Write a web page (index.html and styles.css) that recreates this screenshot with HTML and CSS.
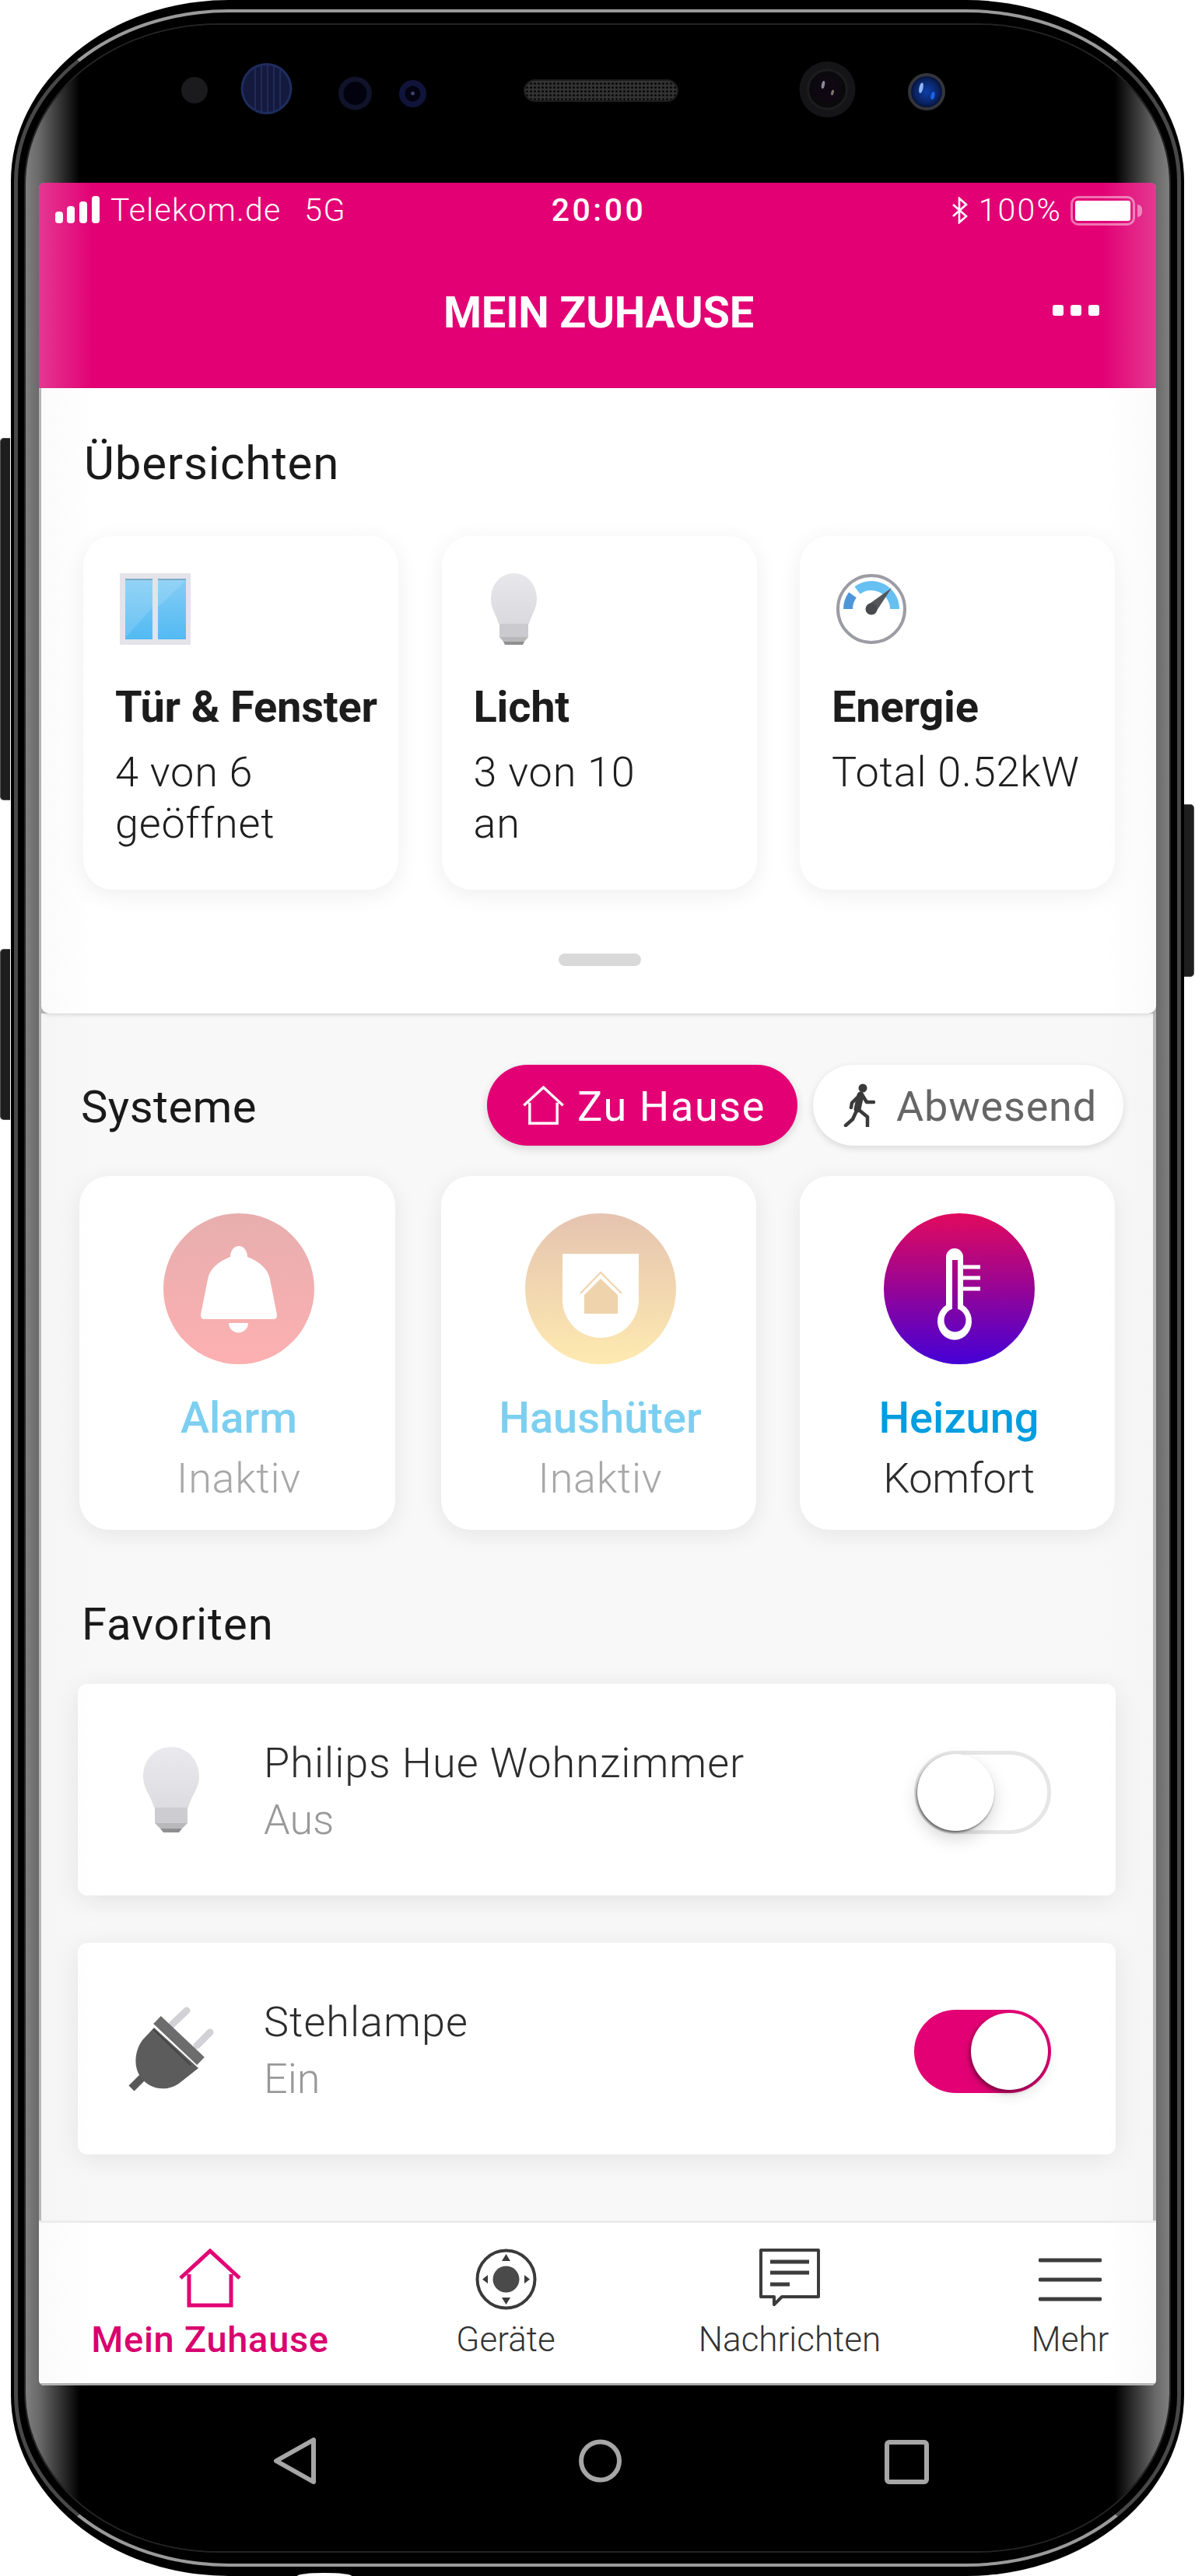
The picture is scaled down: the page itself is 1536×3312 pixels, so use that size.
FILE: index.html
```html
<!DOCTYPE html>
<html lang="de">
<head>
<meta charset="utf-8">
<title>Mein Zuhause</title>
<link rel="stylesheet" href="styles.css">
</head>
<body>
<div class="phone">
  <span class="side-btn side-vol"></span>
  <span class="side-btn side-ai"></span>
  <span class="side-btn side-pow"></span>
  <span class="port"></span>
  <div class="face">
    <svg class="sensors" viewBox="50 32 1436 203" width="1436" height="203">
      <defs>
        <pattern id="mesh" width="5" height="5" patternUnits="userSpaceOnUse"><rect width="5" height="5" fill="#333"/><circle cx="2.500" cy="2.500" r="1.600" fill="#0a0a0a"/></pattern>
        <radialGradient id="blue" cx=".5" cy=".5" r=".55"><stop offset="0" stop-color="#0d3fa8"/><stop offset=".7" stop-color="#0a2260"/><stop offset="1" stop-color="#050c26"/></radialGradient>
      </defs>
      <circle cx="250" cy="116" r="17" fill="#1b1b1d"/>
      <circle cx="342.500" cy="114" r="33" fill="#1e2d5e"/>
      <circle cx="342.500" cy="114" r="30" fill="#141a3e"/>
      <path d="M328 88V140M336 84V144M344 83V145M352 84V144M360 90V138" stroke="#232a5a" stroke-width="2"/>
      <circle cx="456.500" cy="120" r="21.500" fill="#10132a"/>
      <circle cx="456.500" cy="120" r="15" fill="#02020f"/>
      <circle cx="530.500" cy="120.500" r="17.500" fill="#11143a"/>
      <circle cx="530.500" cy="120.500" r="10" fill="#020210"/>
      <circle cx="530.500" cy="120" r="2.500" fill="#3a4168"/>
      <rect x="674" y="103" width="197" height="27" rx="13.500" fill="url(#mesh)" stroke="#1d1d1d" stroke-width="2"/>
      <circle cx="1063.500" cy="115" r="36" fill="#151517"/>
      <circle cx="1063.500" cy="115" r="25" fill="#0a0a0c" stroke="#1d1d20" stroke-width="3"/>
      <circle cx="1063" cy="115" r="16.500" fill="#0f0812"/>
      <ellipse cx="1058" cy="109" rx="2" ry="5" fill="#8d8896" transform="rotate(12 1058 109)"/>
      <ellipse cx="1070" cy="119" rx="1.700" ry="3.500" fill="#7f7c70" transform="rotate(12 1070 119)"/>
      <circle cx="1191" cy="118" r="24" fill="#34353a"/>
      <circle cx="1191" cy="118" r="20" fill="url(#blue)"/>
      <ellipse cx="1184" cy="113" rx="2.500" ry="7" fill="#8fb5f5" transform="rotate(12 1184 113)"/>
      <ellipse cx="1199" cy="123" rx="2.500" ry="5" fill="#1a62e6" transform="rotate(12 1199 123)"/>
    </svg>
    <main class="screen">
      <div class="appbar">
        <div class="status">
          <div class="status-left">
            <svg class="signal" viewBox="0 0 57 35" width="57" height="35"><rect x="0" y="20" width="10" height="15" rx="4" fill="#fff"/><rect x="15" y="13" width="10" height="22" rx="4" fill="#fff"/><rect x="31" y="7" width="10" height="28" rx="4" fill="#fff"/><rect x="47" y="0" width="10" height="35" rx="4" fill="#fff"/></svg>
            <span>Telekom.de</span><span class="net">5G</span>
          </div>
          <div class="status-time">20:00</div>
          <div class="status-right">
            <svg class="bt" viewBox="0 0 21 35" width="21" height="35"><path d="M2 10L19 25L10 33V2L19 10L2 25" fill="none" stroke="#fff" stroke-width="2.600"/></svg>
            <span class="pct">100%</span>
            <span class="battery"><span class="battery-fill"></span></span>
            <span class="battery-cap"></span>
          </div>
        </div>
        <header class="titlebar">
          <h1 class="title">MEIN ZUHAUSE</h1>
          <div class="dots"><i></i><i></i><i></i></div>
        </header>
      </div>

      <div class="content">
        <section class="overview">
          <h2 class="h-over">Übersichten</h2>
          <div class="over-cards">
            <article class="over-card">
              <svg class="over-icon" viewBox="0 0 91 92" width="91" height="92">
                <defs><linearGradient id="pane" x1="0" y1="0" x2="0" y2="1"><stop offset="0" stop-color="#85cdf5"/><stop offset="1" stop-color="#52baf3"/></linearGradient></defs>
                <rect width="91" height="92" fill="#e4e3e9"/>
                <rect x="7" y="7" width="35" height="78" fill="url(#pane)"/>
                <rect x="49" y="7" width="36" height="78" fill="url(#pane)"/>
                <rect x="7" y="7" width="35" height="2" fill="#7aaac8"/>
                <rect x="49" y="7" width="36" height="2" fill="#7aaac8"/>
                <path d="M7 9H42V44L7 83Z" fill="#fff" opacity=".13"/>
                <path d="M49 9H85V9L49 44Z" fill="#fff" opacity=".13"/>
              </svg>
              <h3 class="card-title">Tür &amp; Fenster</h3>
              <p class="card-text">4 von 6<br>geöffnet</p>
            </article>
            <article class="over-card">
              <svg class="over-icon" viewBox="-15 0 91 92" width="91" height="92">
                <defs><linearGradient id="glass" x1="0" y1="0" x2="0" y2="1"><stop offset="0" stop-color="#e8e8ec"/><stop offset="1" stop-color="#d9d9de"/></linearGradient></defs>
                <path d="M30.500 0C47 0 60 14 60 33C60 46 53 53 50 65H11C8 53 1 46 1 33C1 14 14 0 30.500 0Z" fill="url(#glass)"/>
                <path d="M12 65H49V82H12Z" fill="#cbcbcf"/>
                <path d="M12 82H49L44 88H17Z" fill="#b8b8bb"/>
                <path d="M17 88H44L42 92H19Z" fill="#8f8f92"/>
              </svg>
              <h3 class="card-title">Licht</h3>
              <p class="card-text">3 von 10<br>an</p>
            </article>
            <article class="over-card">
              <svg class="over-icon" viewBox="0 0 91 92" width="91" height="92">
                <circle cx="45" cy="46" r="43" fill="#fff" stroke="#9c9ca4" stroke-width="4"/>
                <path d="M15 46A30 30 0 0 1 21 28" fill="none" stroke="#4d96d9" stroke-width="12"/>
                <path d="M27 22A30 30 0 0 1 75 46" fill="none" stroke="#66c0f2" stroke-width="12"/>
                <path d="M40 41L71 19L50 51Z" fill="#55565a"/>
                <circle cx="45" cy="46" r="7.500" fill="#48494c"/>
              </svg>
              <h3 class="card-title">Energie</h3>
              <p class="card-text">Total 0.52kW</p>
            </article>
          </div>
          <div class="handle"></div>
        </section>

        <section class="systems">
          <div class="sys-head">
            <h2 class="h-sys">Systeme</h2>
            <div class="modes">
              <div class="mode mode-on">
                <svg class="mode-home" viewBox="0 0 80 75" width="55" height="51"><path d="M3 37L40 3L77 37M14 32V71H66V32" fill="none" stroke="#fff" stroke-width="5"/></svg>
                <span>Zu Hause</span>
              </div>
              <div class="mode mode-off">
                <svg class="mode-walk" viewBox="0 0 42 56" width="42" height="56"><circle cx="26" cy="6" r="5.500" fill="#3a3a3a"/><path d="M23 15L19 33" stroke="#3a3a3a" stroke-width="9" stroke-linecap="round"/><path d="M20 17L12 25L11 31M26 16L31 24H40M19 33L13 46L4 54M21 34L32 43V55" fill="none" stroke="#3a3a3a" stroke-width="4.500" stroke-linecap="round" stroke-linejoin="round"/></svg>
                <span>Abwesend</span>
              </div>
            </div>
          </div>
          <div class="sys-cards">
            <article class="sys-card">
              <svg class="sys-icon" viewBox="0 0 194 194" width="194" height="194">
                <defs><linearGradient id="g-alarm" x1="0" y1="0" x2="0" y2="1"><stop offset="0" stop-color="#e7aeae"/><stop offset="1" stop-color="#fdb0b1"/></linearGradient></defs>
                <circle cx="97" cy="97" r="97" fill="url(#g-alarm)"/>
                <path d="M97 42C103 42 108 48 108 56C124 62 135 72 137 85L146 130Q146 136 142 136H52Q48 136 48 130L57 85C59 72 70 62 86 56C86 48 91 42 97 42Z" fill="#fff"/>
                <path d="M84 141H109A12.500 12.500 0 0 1 84 141Z" fill="#fff"/>
              </svg>
              <h3 class="sys-title sys-faded">Alarm</h3>
              <p class="sys-sub sys-sub-faded">Inaktiv</p>
            </article>
            <article class="sys-card">
              <svg class="sys-icon" viewBox="0 0 194 194" width="194" height="194">
                <defs><linearGradient id="g-home" x1="0" y1="0" x2="0" y2="1"><stop offset="0" stop-color="#e5c3b0"/><stop offset="1" stop-color="#feeab0"/></linearGradient></defs>
                <circle cx="97" cy="97" r="97" fill="url(#g-home)"/>
                <path d="M48 52H146V111A49 49 0 0 1 48 111Z" fill="#fff"/>
                <path d="M97 84L119 105V129H76V105Z" fill="#efd3ad"/>
                <path d="M71 103L97 76L124 103" fill="none" stroke="#efd3ad" stroke-width="2"/>
              </svg>
              <h3 class="sys-title sys-faded">Haushüter</h3>
              <p class="sys-sub sys-sub-faded">Inaktiv</p>
            </article>
            <article class="sys-card">
              <svg class="sys-icon" viewBox="0 0 194 194" width="194" height="194">
                <defs><linearGradient id="g-heat" x1="0" y1="0" x2="0" y2="1"><stop offset="0" stop-color="#e20a5e"/><stop offset=".45" stop-color="#9e0590"/><stop offset="1" stop-color="#4400d6"/></linearGradient></defs>
                <circle cx="97" cy="97" r="97" fill="url(#g-heat)"/>
                <path fill-rule="evenodd" d="M80 56A11 11 0 0 1 102 56V118A22 24 0 1 1 80 118ZM88 60V123A14 15 0 1 0 95 123V60Z" fill="#fff"/>
                <path d="M102 69H124M102 83H124M102 97H124" stroke="#fff" stroke-width="5"/>
              </svg>
              <h3 class="sys-title">Heizung</h3>
              <p class="sys-sub sys-sub-dark">Komfort</p>
            </article>
          </div>

          <h2 class="h-fav">Favoriten</h2>
          <article class="fav">
            <div class="fav-icon">
              <svg viewBox="0 0 72 110" width="72" height="110">
                <defs><linearGradient id="glass2" x1="0" y1="0" x2="0" y2="1"><stop offset="0" stop-color="#eaeaee"/><stop offset="1" stop-color="#dcdce1"/></linearGradient></defs>
                <path d="M36 0C56 0 72 16 72 38C72 54 62 62 58 78H14C10 62 0 54 0 38C0 16 16 0 36 0Z" fill="url(#glass2)"/>
                <path d="M15 78H57V98H15Z" fill="#cdcdd1"/>
                <path d="M15 98H57L50 105H22Z" fill="#b8b8bb"/>
                <path d="M22 105H50L46 110H26Z" fill="#8f8f92"/>
              </svg>
            </div>
            <div class="fav-text">
              <h3 class="fav-title">Philips Hue Wohnzimmer</h3>
              <p class="fav-sub">Aus</p>
            </div>
            <div class="toggle toggle-off"><span class="knob"></span></div>
          </article>
          <article class="fav fav-second">
            <div class="fav-icon">
              <svg viewBox="0 0 110 110" width="110" height="110">
                <path d="M56 24L75 6M88 51L105 34" stroke="#d2d2d6" stroke-width="9" stroke-linecap="round"/>
                <path d="M24 86L4 106" stroke="#575757" stroke-width="10"/>
                <path d="M33 28L90 80L66 99C50 111 28 108 16 92C6 78 8 58 18 44Z" fill="#5c5c5c"/>
                <path d="M37 18L93 71" stroke="#6c6c6c" stroke-width="14"/>
                <path d="M32 30L80 76" stroke="#444" stroke-width="2"/>
              </svg>
            </div>
            <div class="fav-text">
              <h3 class="fav-title">Stehlampe</h3>
              <p class="fav-sub">Ein</p>
            </div>
            <div class="toggle toggle-on"><span class="knob"></span></div>
          </article>
        </section>
      </div>

      <nav class="tabbar">
        <div class="tab tab-active">
          <svg viewBox="0 0 80 79" width="80" height="79"><path d="M2 38L40 3L78 38M13 33V73H67V33" fill="none" stroke="#e20074" stroke-width="5"/></svg>
          <span>Mein Zuhause</span>
        </div>
        <div class="tab">
          <svg viewBox="0 0 79 79" width="79" height="79"><circle cx="39.500" cy="39.500" r="37" fill="none" stroke="#3a3a3a" stroke-width="4"/><circle cx="39.500" cy="39.500" r="17" fill="#4a4a4a"/><path d="M39.500 7L45 16H34ZM39.500 72L45 63H34ZM9 39.500L16 34V45ZM70 39.500L63 34V45Z" fill="#3a3a3a"/></svg>
          <span>Geräte</span>
        </div>
        <div class="tab">
          <svg viewBox="0 0 80 79" width="80" height="79"><path d="M3 2H77V62H30L20 72V62H3Z" fill="none" stroke="#3c3c3c" stroke-width="4" stroke-linejoin="round"/><path d="M15 17H65M15 31H65M15 46H40" stroke="#3c3c3c" stroke-width="5"/></svg>
          <span>Nachrichten</span>
        </div>
        <div class="tab tab-last">
          <svg viewBox="0 0 81 79" width="81" height="79"><path d="M2 15H79M2 40H79M2 65H79" stroke="#3c3c3c" stroke-width="5" stroke-linecap="round"/></svg>
          <span>Mehr</span>
        </div>
      </nav>
    </main>
    <div class="softkeys">
      <svg viewBox="0 0 54 60" width="54" height="60"><path d="M51 3V57L3 30Z" fill="none" stroke="#a6a6a6" stroke-width="6" stroke-linejoin="round"/></svg>
      <svg viewBox="0 0 55 60" width="55" height="60"><circle cx="27.500" cy="30" r="24.500" fill="none" stroke="#a6a6a6" stroke-width="6"/></svg>
      <svg viewBox="0 0 57 60" width="57" height="60"><rect x="3" y="6" width="51" height="51" rx="3" fill="none" stroke="#a6a6a6" stroke-width="6"/></svg>
    </div>
  </div>
</div>
</body>
</html>
```
FILE: styles.css
```css
* { box-sizing: border-box; }
html, body { margin: 0; padding: 0; }
body {
  width: 1536px;
  height: 3312px;
  background: #fff;
  overflow: hidden;
  font-family: Roboto, "Liberation Sans", sans-serif;
  color: #1c1c1c;
}
h1, h2, h3, p { margin: 0; font-weight: inherit; font-size: inherit; }

.phone {
  position: relative;
  width: 1508px;
  height: 3312px;
  margin-left: 14px;
  padding: 32px 19px;
  background: #000;
  border-radius: 280px / 233px;
}
.phone::before {
  content: "";
  position: absolute;
  inset: 12px 4px;
  border-style: solid;
  border-width: 4px 5px;
  border-color: #9a9a9a #484848;
  border-radius: 276px / 221px;
}
.side-btn {
  position: absolute;
  width: 13px;
  background: #1e1e1e;
  border: 1.500px solid #555;
}
.side-vol, .side-ai { left: -14px; border-right: 0; border-radius: 5px 0 0 5px; }
.side-vol { top: 563px; height: 466px; }
.side-ai { top: 1220px; height: 220px; }
.side-pow { right: -13px; top: 1034px; height: 222px; border-left: 0; border-radius: 0 5px 5px 0; }
.port {
  position: absolute;
  left: 368px;
  bottom: -4px;
  width: 70px;
  height: 8px;
  background: #fff;
  border-radius: 50%;
}

.face {
  position: relative;
  height: 3248px;
  padding: 0 17px;
  border-radius: 248px / 204px;
  background: linear-gradient(90deg, #7e7e7e 0, #6a6a6a 17px, #000 70px, #000 calc(100% - 70px), #6a6a6a calc(100% - 17px), #7e7e7e 100%);
  box-shadow: 0 0 0 2px #242424;
}
.sensors { display: block; }

.screen {
  position: relative;
  display: flex;
  flex-direction: column;
  height: 2832px;
  background: #a9a9a9;
  border-radius: 7px;
  overflow: hidden;
}
.screen::before, .screen::after {
  content: "";
  position: absolute;
  top: 0;
  bottom: 0;
  width: 70px;
  z-index: 3;
}
.screen::before { left: 0; background: linear-gradient(90deg, rgba(235,235,238,.24), rgba(235,235,238,0)); }
.screen::after { right: 0; background: linear-gradient(270deg, rgba(235,235,238,.24), rgba(235,235,238,0)); }

/* App bar */
.appbar { background: #e20074; color: #fff; height: 264px; flex: none; }
.status {
  display: grid;
  grid-template-columns: 1fr auto 1fr;
  height: 70px;
  padding: 0 18px 0 21px;
  font-size: 41px;
  font-weight: 300;
  line-height: 70px;
}
.status-left { display: flex; align-items: flex-start; letter-spacing: 1.200px; }
.signal { margin: 17px 14px 0 0; }
.net { margin-left: 30px; letter-spacing: 1.500px; }
.status-time { font-weight: 500; font-size: 41px; letter-spacing: 3.500px; }
.status-right { display: flex; justify-content: flex-end; align-items: flex-start; }
.pct { letter-spacing: 2.200px; }
.bt { margin: 18px 14px 0 0; }
.battery {
  display: block;
  width: 83px;
  height: 38px;
  margin: 17px 0 0 11px;
  padding: 3px;
  border: 3px solid rgba(255,255,255,.45);
  border-radius: 10px;
}
.battery-fill { display: block; height: 100%; background: #fff; border-radius: 3px; }
.battery-cap {
  display: block;
  width: 6px;
  height: 16px;
  margin: 28px 0 0 3px;
  background: rgba(255,255,255,.45);
  border-radius: 0 8px 8px 0;
}
.titlebar {
  position: relative;
  display: flex;
  justify-content: center;
  align-items: center;
  height: 194px;
}
.title { font-size: 56px; font-weight: 700; line-height: 66px; letter-spacing: -.2px; margin-left: 3px; }
.dots { position: absolute; right: 73px; top: 87px; display: flex; gap: 9px; }
.dots i { display: block; width: 14px; height: 14px; background: #fff; border-radius: 3px; }

/* Content */
.content { flex: 1; min-height: 0; padding: 0 4px 0 3px; background: #a9a9a9; display: flex; flex-direction: column; }
.overview {
  flex: none;
  position: relative;
  z-index: 1;
  height: 804px;
  margin-right: -4px;
  padding: 62px 0 0 54px;
  background: #fff;
  border-radius: 0 0 10px 10px;
  box-shadow: 0 2px 5px rgba(0,0,0,.14);
}
.h-over { font-size: 60px; line-height: 70px; font-weight: 400; color: #191919; margin: 0 0 58px 1px; letter-spacing: .8px; }
.over-cards { display: flex; gap: 55.500px; }
.over-card {
  width: 405px;
  height: 455px;
  padding: 48px 0 0 41px;
  background: #fff;
  border-radius: 38px;
  box-shadow: 0 6px 30px rgba(0,0,0,.07);
}
.over-icon { display: block; margin-left: 6px; }
.card-title { font-size: 56px; line-height: 66px; font-weight: 700; color: #1c1c1c; margin-top: 47px; white-space: nowrap; letter-spacing: -.2px; }
.card-text { font-size: 54px; line-height: 66px; font-weight: 300; color: #1e1e1e; margin-top: 18px; white-space: nowrap; letter-spacing: .8px; }
.handle { width: 106px; height: 16px; margin: 82px 0 0 611px; background: #d9d9d9; border-radius: 8px; }

.systems { flex: 1; min-height: 0; background: #f8f8f8; padding: 66px 0 0 49px; }
.sys-head { display: flex; justify-content: space-between; padding-right: 38px; }
.h-sys { font-size: 58px; line-height: 99px; font-weight: 400; color: #191919; padding-top: 5px; margin-left: 2px; letter-spacing: .4px; }
.modes { display: flex; gap: 20px; }
.mode {
  display: flex;
  align-items: center;
  height: 104px;
  width: 399px;
  border-radius: 52px;
  font-size: 54px;
  font-weight: 400;
  line-height: 104px;
}
.mode span { padding-top: 3px; }
.mode-on { background: #e20074; color: #fff; padding-left: 45px; box-shadow: 0 4px 12px rgba(0,0,0,.14); letter-spacing: 1.600px; }
.mode-off { background: #fff; color: #666; padding-left: 38px; box-shadow: 0 3px 10px rgba(0,0,0,.13); letter-spacing: .8px; }
.mode-home { margin-right: 16px; }
.mode-walk { margin-right: 27px; }

.sys-cards { display: flex; gap: 56px; margin-top: 39px; }
.sys-card {
  display: flex;
  flex-direction: column;
  align-items: center;
  width: 405px;
  height: 455px;
  padding: 48px 0 0 4px;
  background: #fff;
  border-radius: 38px;
  box-shadow: 0 6px 30px rgba(0,0,0,.08);
}
.sys-card:first-child { width: 406px; margin-right: 3px; }
.sys-icon { display: block; }
.sys-title { font-size: 56px; line-height: 66px; font-weight: 500; color: #009de0; margin-top: 36px; }
.sys-faded { color: #7ccff0; }
.sys-sub { font-size: 54px; line-height: 66px; font-weight: 300; color: #2c2c2c; margin-top: 12px; }
.sys-sub-faded { color: #a8a8a8; letter-spacing: .7px; }
.sys-sub-dark { letter-spacing: -.3px; }

.h-fav { font-size: 58px; line-height: 70px; font-weight: 400; color: #191919; margin: 86px 0 42px 3px; letter-spacing: .9px; }
.fav {
  display: flex;
  align-items: center;
  width: 1334px;
  height: 272px;
  margin-left: -2px;
  padding: 0 83px 0 65px;
  background: #fff;
  border-radius: 12px;
  box-shadow: 0 6px 36px rgba(0,0,0,.09);
}
.fav-second { margin-top: 61px; }
.fav-icon { width: 110px; display: flex; justify-content: center; flex: none; }
.fav-text { flex: 1; padding: 4px 0 0 64px; }
.fav-title { font-size: 54px; line-height: 60px; font-weight: 300; color: #2c2c2c; white-space: nowrap; letter-spacing: 1px; }
.fav-sub { font-size: 54px; line-height: 60px; font-weight: 300; color: #999; margin-top: 13px; }
.toggle {
  display: flex;
  align-items: center;
  flex: none;
  width: 176px;
  height: 107px;
  margin-top: 6px;
  border-radius: 54px;
}
.knob { display: block; width: 99px; height: 99px; background: #fff; border-radius: 50%; }
.toggle-off { padding-left: 0; border: 5px solid #e6e6e6; }
.toggle-off .knob { margin-left: -1px; box-shadow: -1px 2px 3px rgba(0,0,0,.55), 0 10px 22px rgba(0,0,0,.16); }
.toggle-on { background: #e20074; justify-content: flex-end; padding-right: 4px; }
.toggle-on .knob { box-shadow: -2px 3px 5px rgba(0,0,0,.4), 1px 8px 16px rgba(0,0,0,.1); }

/* Tab bar */
.tabbar {
  flex: none;
  position: relative;
  z-index: 2;
  display: grid;
  grid-template-columns: 440px 320px 410px 266px;
  height: 212px;
  padding-top: 33px;
  background: #fff;
  border-top: 3px solid #ececec;
  border-bottom: 3px solid #a9a9a9;
}
.tab { display: flex; flex-direction: column; align-items: center; font-size: 44px; line-height: 50px; font-weight: 300; color: #333; }
.tab svg { display: block; margin-bottom: 13px; }
.tab-active { color: #d9006f; font-size: 47px; font-weight: 500; letter-spacing: .7px; }
.tab-last { width: 95px; justify-self: end; margin-right: 63px; }

.softkeys { display: flex; gap: 338px; padding: 67px 0 0 302px; }
.softkeys svg { display: block; }
```
